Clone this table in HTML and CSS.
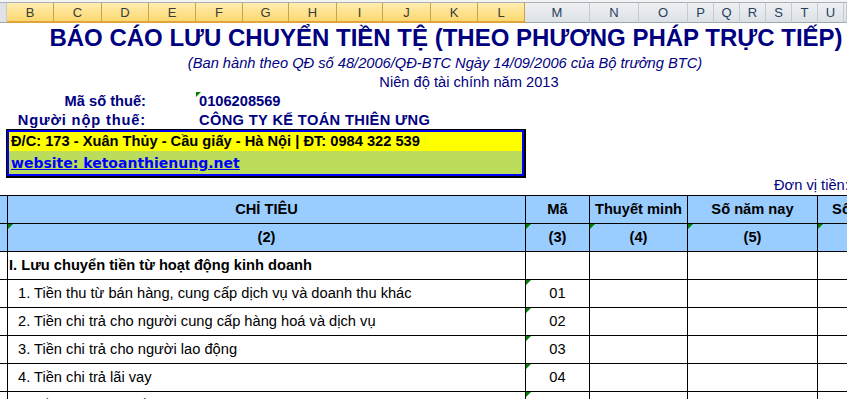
FILE: index.html
```html
<!DOCTYPE html>
<html lang="vi">
<head>
<meta charset="utf-8">
<title>Báo cáo lưu chuyển tiền tệ</title>
<link rel="stylesheet" href="styles.css">
</head>
<body>
<div class="colhdr">
  <div class="ch corner"></div>
  <div class="ch sel">B</div><div class="ch sel">C</div><div class="ch sel">D</div><div class="ch sel">E</div>
  <div class="ch sel">F</div><div class="ch sel">G</div><div class="ch sel">H</div><div class="ch sel">I</div>
  <div class="ch sel">J</div><div class="ch sel">K</div><div class="ch sel">L</div>
  <div class="ch">M</div><div class="ch">N</div><div class="ch">O</div><div class="ch">P</div>
  <div class="ch">Q</div><div class="ch">R</div><div class="ch">S</div><div class="ch">T</div>
  <div class="ch">U</div><div class="ch"></div>
</div>
<div class="sheet">
  <div class="title">BÁO CÁO LƯU CHUYỂN TIỀN TỆ (THEO PHƯƠNG PHÁP TRỰC TIẾP)</div>
  <div class="subtitle">(Ban hành theo QĐ số 48/2006/QĐ-BTC Ngày 14/09/2006 của Bộ trưởng BTC)</div>
  <div class="period">Niên độ tài chính năm 2013</div>
  <div class="info r1">
    <div class="lbl">Mã số thuế:</div>
    <div class="val mark">0106208569</div>
  </div>
  <div class="info r2">
    <div class="lbl">Người nộp thuế:</div>
    <div class="val">CÔNG TY KẾ TOÁN THIÊN ƯNG</div>
  </div>
  <div class="box">
    <div class="box-in">
      <div class="addr">Đ/C: 173 - Xuân Thủy - Cầu giấy - Hà Nội | ĐT: 0984 322 539</div>
      <div class="web"><a href="#">website: ketoanthienung.net</a></div>
    </div>
  </div>
  <div class="unit">Đơn vị tiền:</div>
  <div class="tbl">
    <div class="c hd"></div>
    <div class="c hd ctr">CHỈ TIÊU</div>
    <div class="c hd ctr">Mã</div>
    <div class="c hd ctr">Thuyết minh</div>
    <div class="c hd ctr">Số năm nay</div>
    <div class="c hd ctr">Số năm trước</div>

    <div class="c hd"></div>
    <div class="c hd ctr mark">(2)</div>
    <div class="c hd ctr mark">(3)</div>
    <div class="c hd ctr mark">(4)</div>
    <div class="c hd ctr mark">(5)</div>
    <div class="c hd ctr mark">(6)</div>

    <div class="c"></div>
    <div class="c b sec">I. Lưu chuyển tiền từ hoạt động kinh doanh</div>
    <div class="c"></div><div class="c"></div><div class="c"></div><div class="c"></div>

    <div class="c"></div>
    <div class="c item">1. Tiền thu từ bán hàng, cung cấp dịch vụ và doanh thu khác</div>
    <div class="c ctr mark">01</div><div class="c"></div><div class="c"></div><div class="c"></div>

    <div class="c"></div>
    <div class="c item">2. Tiền chi trả cho người cung cấp hàng hoá và dịch vụ</div>
    <div class="c ctr mark">02</div><div class="c"></div><div class="c"></div><div class="c"></div>

    <div class="c"></div>
    <div class="c item">3. Tiền chi trả cho người lao động</div>
    <div class="c ctr mark">03</div><div class="c"></div><div class="c"></div><div class="c"></div>

    <div class="c"></div>
    <div class="c item">4. Tiền chi trả lãi vay</div>
    <div class="c ctr mark">04</div><div class="c"></div><div class="c"></div><div class="c"></div>

    <div class="c"></div>
    <div class="c item">5. Tiền chi nộp thuế thu nhập doanh nghiệp</div>
    <div class="c ctr mark">05</div><div class="c"></div><div class="c"></div><div class="c"></div>
  </div>
</div>
</body>
</html>
```
FILE: styles.css
```css
html, body {
  margin: 0;
  padding: 0;
  background: #fff;
  overflow: hidden;
  width: 847px;
  height: 399px;
}
body {
  font-family: "Liberation Sans", Arial, sans-serif;
  font-size: 14.67px;
  color: #000;
}
.colhdr {
  display: grid;
  grid-template-columns: 7px 47px 48px 47px 47px 47px 46px 48px 46px 48px 47px 47px 65px 49px 49px 26px 26px 26px 26px 26px 26px 3px;
  height: 23px;
  box-sizing: border-box;
  padding-top: 2px;
  background: #f3f3f3;
}
.ch {
  box-sizing: border-box;
  height: 21px;
  border-top: 1px solid #a9b1bb;
  border-right: 1px solid #c5cad2;
  border-bottom: 1px solid #9ea6b0;
  background: linear-gradient(#eef0f3, #dde1e6);
  color: #27415f;
  font-size: 13px;
  line-height: 19px;
  text-align: center;
}
.ch.corner {
  background: #dfe3e8;
}
.ch.sel {
  background: linear-gradient(#ffedb0, #fbd870);
  border-right-color: #c9a24d;
  border-bottom: 2px solid #e2a53b;
  color: #3b3b3b;
}
.sheet {
  width: 847px;
}
.title {
  height: 30px;
  line-height: 30px;
  padding-left: 45px;
  text-align: center;
  white-space: nowrap;
  font-size: 24px;
  font-weight: bold;
  color: #000080;
}
.subtitle {
  height: 20px;
  line-height: 20px;
  padding-left: 43px;
  text-align: center;
  white-space: nowrap;
  font-style: italic;
  color: #000080;
}
.period {
  height: 19px;
  line-height: 19px;
  padding-left: 91px;
  text-align: center;
  color: #000080;
}
.info {
  display: grid;
  grid-template-columns: 196px 1fr;
  font-weight: bold;
  color: #000080;
  white-space: nowrap;
}
.info.r1 { height: 19px; line-height: 19px; }
.info.r2 { height: 18px; line-height: 18px; }
.lbl {
  text-align: right;
  padding-right: 50px;
}
.r2 .lbl { letter-spacing: 0.85px; }
.r2 .val { letter-spacing: 0.35px; }
.val {
  padding-left: 3px;
}
.mark { position: relative; }
.mark::before {
  content: "";
  position: absolute;
  left: 0;
  top: 0;
  border-top: 5px solid #008000;
  border-right: 5px solid transparent;
}
.box {
  margin-left: 6px;
  width: 520px;
  box-sizing: border-box;
  border: 1px solid #000;
  border-right-width: 2px;
  border-bottom-width: 2px;
}
.box-in {
  border: 2px solid #0000ff;
}
.addr {
  height: 19px;
  line-height: 19px;
  padding-left: 2px;
  background: #ffff00;
  font-weight: bold;
  white-space: nowrap;
}
.web {
  height: 23px;
  box-sizing: border-box;
  padding-top: 2px;
  line-height: 20px;
  padding-left: 2px;
  background: #bcdc5c;
}
.web a {
  font-family: "DejaVu Sans", Verdana, sans-serif;
  font-weight: bold;
  font-size: 14px;
  color: #0000ff;
  text-decoration: underline;
}
.unit {
  height: 17px;
  line-height: 14px;
  padding-left: 774px;
  white-space: nowrap;
  color: #000080;
}
.tbl {
  display: grid;
  grid-template-columns: 8px 518px 64px 98px 130px 126px;
  border-top: 1px solid #000;
  width: 944px;
}
.c {
  box-sizing: border-box;
  height: 28px;
  line-height: 27px;
  border-right: 1px solid #000;
  border-bottom: 1px solid #000;
  white-space: nowrap;
  overflow: hidden;
}
.hd {
  background: #99ccff;
  font-weight: bold;
}
.ctr { text-align: center; }
.sec {
  font-weight: bold;
  padding-left: 1px;
}
.item {
  padding-left: 10px;
}
```
